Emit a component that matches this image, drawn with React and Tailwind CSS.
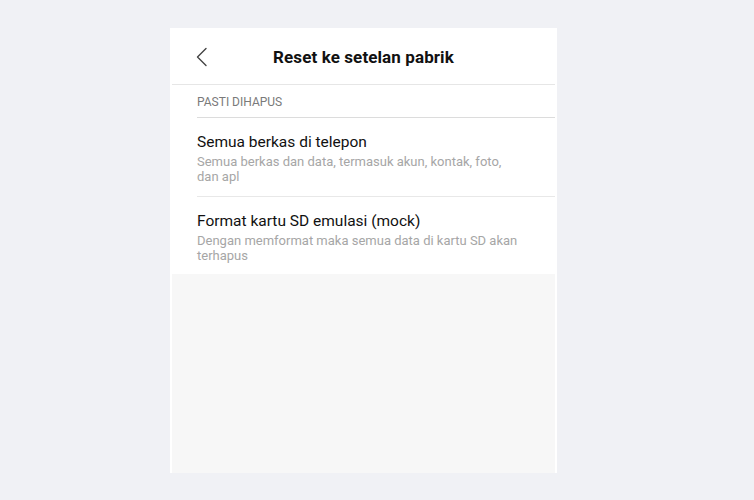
export default function App() {
  const items = [
    {
      title: "Semua berkas di telepon",
      desc: "Semua berkas dan data, termasuk akun, kontak, foto, dan apl",
      divider: true,
    },
    {
      title: "Format kartu SD emulasi (mock)",
      desc: "Dengan memformat maka semua data di kartu SD akan terhapus",
      divider: false,
    },
  ];

  return (
    <div className="min-h-[500px] bg-[#f0f1f5] pt-[28px]" style={{ fontFamily: "Roboto, 'Noto Sans', sans-serif" }}>
      <div className="ml-[170px] w-[387px] h-[445px] bg-white px-[2px] flex flex-col">
        {/* header */}
        <div className="relative h-[57px] border-b border-[#e6e6e6] flex items-center justify-center shrink-0">
          <button className="absolute left-[23px] top-[19px] text-[#333]">
            <svg width="14" height="20" viewBox="0 0 14 20" fill="none">
              <path d="M11 1.5 L2.5 10 L11 18.5" stroke="#444" strokeWidth="1.4" strokeLinecap="round" strokeLinejoin="round" />
            </svg>
          </button>
          <h1 className="mt-[3px] text-[17px] font-bold text-[#111] tracking-[0.1px]">Reset ke setelan pabrik</h1>
        </div>

        {/* section label */}
        <div className="ml-[25px] h-[33px] border-b border-[#dcdcdc] flex items-center shrink-0">
          <span className="mt-[1px] text-[12px] text-[#7a7a7a] uppercase">Pasti dihapus</span>
        </div>

        {/* items */}
        {items.map((it) => (
          <div key={it.title} className="pl-[25px] shrink-0">
            <div className={`pt-[14px] ${it.divider ? "pb-[12px] border-b border-[#e8e8e8]" : "pb-[11px]"}`}>
              <p className="text-[15.5px] leading-[20px] text-[#111]">{it.title}</p>
              <p className="mt-[2px] text-[13px] leading-[15px] text-[#a6a6a6] max-w-[322px]">{it.desc}</p>
            </div>
          </div>
        ))}

        <div className="flex-1 bg-[#f7f7f7]" />
      </div>
    </div>
  );
}
